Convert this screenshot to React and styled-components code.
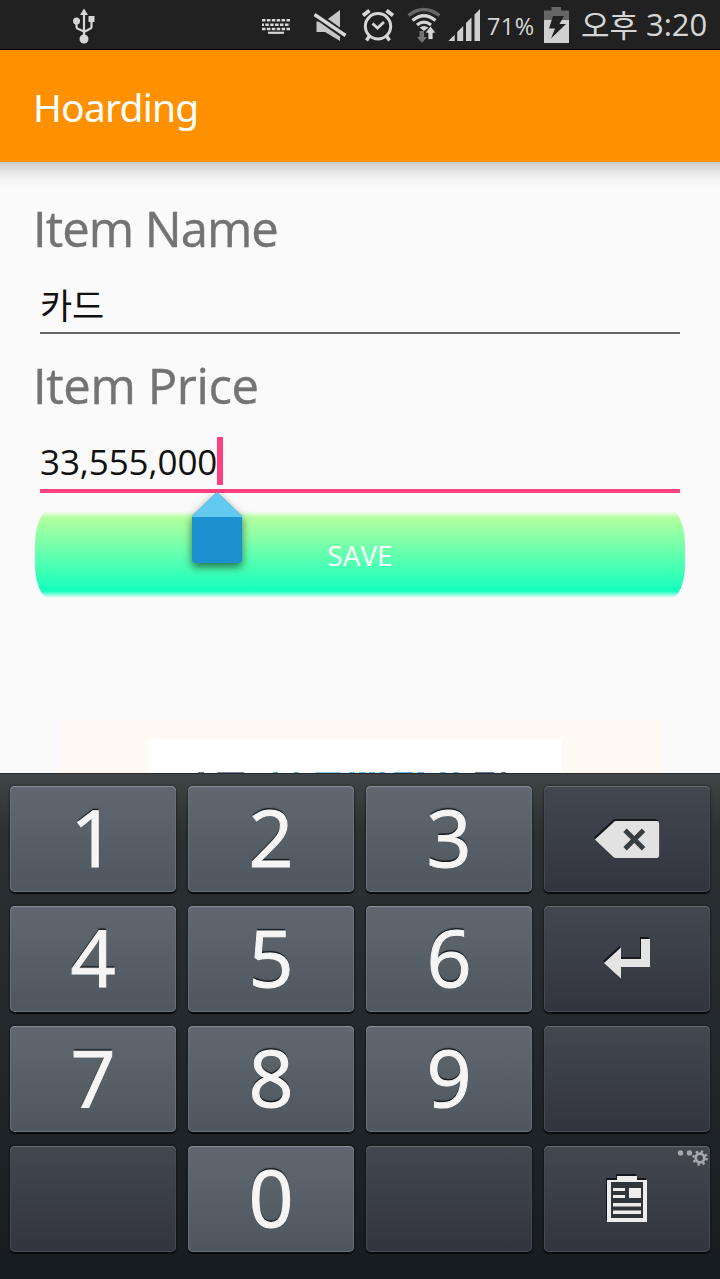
import React from "react";
import styled, { createGlobalStyle } from "styled-components";

const GlobalStyle = createGlobalStyle`
  * {
    box-sizing: border-box;
  }
  body {
    margin: 0;
    background: #fafafa;
    font-family: "Open Sans", "Noto Sans CJK KR", sans-serif;
  }
  svg {
    display: block;
    flex: none;
  }
`;

const Screen = styled.div`
  width: 720px;
  height: 1279px;
  display: flex;
  flex-direction: column;
  overflow: hidden;
  background: #fafafa;
`;

const StatusBar = styled.header`
  flex: none;
  height: 50px;
  display: flex;
  align-items: center;
  background: #212121;
  border-bottom: 1px solid #000;
  color: #d6d6d6;
  padding-left: 70px;
`;
const StatusGroup = styled.div`
  display: flex;
  align-items: center;
  margin-left: auto;
`;
const Percent = styled.span`
  width: 58px;
  padding: 3px 0 0 2px;
  font-size: 23.5px;
  line-height: 50px;
  letter-spacing: 0.4px;
  white-space: nowrap;
`;
const Clock = styled.span`
  width: 146px;
  display: flex;
  padding-left: 7px;
  line-height: 49px;
  font-size: 31px;
  white-space: nowrap;
`;
const Meridiem = styled.span`
  width: 65px;
  font-family: "Noto Sans CJK KR", sans-serif;
  font-weight: 400;
  font-size: 31px;
  line-height: 47px;
`;

const Toolbar = styled.div`
  flex: none;
  height: 112px;
  position: relative;
  display: flex;
  align-items: center;
  padding: 0 33px;
  background: #ff9100;

  &::after {
    content: "";
    position: absolute;
    top: 100%;
    left: 0;
    right: 0;
    height: 25px;
    background: linear-gradient(
      rgba(0, 0, 0, 0.19),
      rgba(0, 0, 0, 0.09) 35%,
      rgba(0, 0, 0, 0.02) 75%,
      transparent
    );
  }
`;
const Title = styled.h1`
  margin: 0;
  color: #fff;
  font-family: "Noto Sans", sans-serif;
  font-weight: 400;
  font-size: 39px;
  letter-spacing: -0.8px;
`;

const Content = styled.main`
  flex: 1;
  min-height: 0;
  overflow: hidden;
  padding: 32px 32px 0;
`;
const Label = styled.div`
  height: 66px;
  padding-left: 1px;
  line-height: 68px;
  font-size: 49px;
  letter-spacing: ${(p) => p.$spacing}px;
  color: #737373;
  -webkit-text-stroke: 0.4px #737373;
`;
const Field = styled.div`
  position: relative;
  display: flex;
  align-items: center;
  margin: 0 8px ${(p) => (p.$active ? 18 : 17)}px;
  height: ${(p) => (p.$active ? 76 : 74)}px;
  padding-top: 16px;
  border-bottom: ${(p) => (p.$active ? "4px solid #ff4081" : "2px solid #666")};
  font-size: 35px;
  letter-spacing: -0.1px;
  color: #111;
`;
const Korean = styled.span`
  font-family: "Noto Sans CJK KR", sans-serif;
  font-size: 35px;
  line-height: 50px;
`;
const Caret = styled.span`
  width: 6px;
  height: 48px;
  background: #ff4081;
`;
const Handle = styled.svg`
  position: absolute;
  top: 73px;
  left: 142px;
  z-index: 2;
  overflow: visible;
  filter: drop-shadow(0 4px 4px rgba(0, 0, 0, 0.55));
`;
const SaveButton = styled.button`
  display: block;
  width: 650px;
  height: 87px;
  margin: 0 3px;
  padding: 1px 0 0;
  border: 0;
  border-radius: 14px / 34px;
  background: linear-gradient(
    rgba(178, 255, 158, 0),
    #b2ff9e 7px,
    #14ffbf 80px,
    rgba(20, 255, 191, 0)
  );
  color: #fff;
  font-family: "Open Sans", sans-serif;
  font-size: 28px;
`;

const Banner = styled.div`
  width: 600px;
  height: 150px;
  margin: 122px auto 0;
  padding-top: 19px;
  background: #fff9f3;
`;
const BannerCard = styled.div`
  width: 414px;
  height: 130px;
  margin-left: 88px;
  padding-top: 33px;
  background: #fff;
`;

const Keyboard = styled.section`
  flex: none;
  height: 506px;
  padding: 12px 10px 0;
  border-top: 1px solid #26292b;
  display: grid;
  grid-template-columns: repeat(4, 166px);
  grid-auto-rows: 106px;
  gap: 14px 12px;
  background: linear-gradient(#404547, #2b3033 12%, #23292d 50%, #171c20);
`;
const Key = styled.div`
  position: relative;
  display: flex;
  align-items: center;
  justify-content: center;
  border-radius: 5px;
  background: ${(p) =>
    p.$dark
      ? "linear-gradient(#43474e, #3a3e46 50%, #32353e)"
      : "linear-gradient(#606770, #555e65 60%, #50565e)"};
  box-shadow:
    inset 0 1px 0 ${(p) => (p.$dark ? "#646b70" : "#899198")},
    inset 0 0 0 1px ${(p) => (p.$dark ? "#444a50" : "#687078")},
    0 2px 1px #080a0c,
    0 0 3px rgba(0, 0, 0, 0.6);
`;
const Digit = styled.span`
  height: 106px;
  color: #f5f5f5;
  font-size: 79px;
  line-height: 101px;
  -webkit-text-stroke: 1px #f5f5f5;
  text-shadow: 0 -2px 1px #15191c;
`;
const KeyIcon = styled.svg`
  filter: drop-shadow(-1px -2px 0 #14171b);
`;
const Corner = styled.svg`
  position: absolute;
  top: 2px;
  right: 1px;
`;

const UsbIcon = () => (
  <svg width="28" height="50" viewBox="70 0 28 50" fill="none" stroke="#d6d6d6" strokeWidth="2.2">
    <path d="M84 37V13M76.5 21v5.5q0 2 2 2.5l5.5 2.5M91.5 19v7.5q0 2-2 2.5L84 32" />
    <path d="M84 8.5l4 6.5h-8z" fill="#d6d6d6" stroke="none" />
    <circle cx="76.5" cy="21" r="3.5" fill="#d6d6d6" stroke="none" />
    <rect x="88.500" y="16" width="6" height="6" fill="#d6d6d6" stroke="none" />
    <circle cx="84" cy="39" r="4.5" fill="#d6d6d6" stroke="none" />
  </svg>
);

const KeyboardIcon = () => (
  <svg width="48" height="50" viewBox="260 0 48 50" stroke="#d6d6d6" strokeWidth="2.6" fill="none">
    <path d="M262 20.3h28" strokeDasharray="3.5 1.4" />
    <path d="M262 24.7h28" strokeDasharray="2 1.3 3.5 1.4 3.5 1.4 3.5 1.4 3.5 1.4 3.5 1.4" />
    <path d="M262 29h28" strokeDasharray="3.5 1.4" />
    <path d="M268 32.8h16" strokeWidth="2.2" />
  </svg>
);

const MuteIcon = () => (
  <svg width="48" height="50" viewBox="308 0 48 50">
    <path d="M316.5 21.5h8L340 10v31l-15-9h-8.5z" fill="#c6c6c6" />
    <path d="M313 13l34 24" stroke="#212121" strokeWidth="7.5" />
    <path d="M314.5 14.5l31 21" stroke="#d6d6d6" strokeWidth="3.4" />
  </svg>
);

const AlarmIcon = () => (
  <svg width="44" height="50" viewBox="356 0 44 50" stroke="#d6d6d6" fill="none">
    <circle cx="378" cy="26.3" r="12.7" strokeWidth="3" />
    <path d="M363 15.5l6.5-5M393 15.5l-6.5-5" strokeWidth="4" />
    <path d="M369.5 36l-3 4.5M386.5 36l3 4.5" strokeWidth="3.5" />
    <path d="M372.5 23.5l5 4.5 6.5-6" strokeWidth="2.8" />
  </svg>
);

const WifiIcon = () => (
  <svg width="46" height="50" viewBox="400 0 46 50" stroke="#d6d6d6" strokeWidth="3.2" fill="none">
    <path d="M408.5 15.5q15-12 31 0" stroke="#666" />
    <path d="M412.5 20.5q11.500-9.500 23 0" />
    <path d="M417 25q7-5.800 14 0" />
    <path d="M419.5 27.5q4.5-3 9 0l-4.5 3.5z" fill="#d6d6d6" stroke="none" />
    <path d="M419.5 31h4.5v6h3l-5 6-5-6h2.5z" fill="#747474" stroke="none" />
    <path d="M428 39.5h5V33h3l-5.5-7-5.5 7h3z" fill="#d6d6d6" stroke="#212121" strokeWidth="0.8" />
  </svg>
);

const SignalIcon = () => (
  <svg width="39" height="50" viewBox="446 0 39 50" fill="#cfcfcf">
    <path d="M448.3 41l6.4-6.300V41zM457.200 41v-9l6-6v15zM466 41V23l5.5-5.5V41zM474.500 41V14.500L480 9v32z" />
  </svg>
);

const BatteryIcon = () => (
  <svg width="31" height="50" viewBox="543 0 31 50">
    <path d="M551.500 7h9.500v3.500h8V20h-25v-9.500h7.500z" fill="#666" />
    <path d="M544 20h25v23h-25z" fill="#d0d0d0" />
    <path d="M553 16h11l-4.5 8h6.5l-15 14.5 4-10h-6z" fill="#212121" />
  </svg>
);

const BackspaceIcon = () => (
  <KeyIcon width="68" height="37" viewBox="0 0 68 38">
    <path d="M1 19L20 1.500Q21 0 23 0H64.500Q67 0 67 2.500V35.500Q67 38 64.500 38H23Q21 38 20 37z" fill="#e2e2e2" />
    <path d="M32 9.500l19 19M51 9.500l-19 19" stroke="#363d43" strokeWidth="5" />
  </KeyIcon>
);

const EnterIcon = () => (
  <KeyIcon width="48" height="40" viewBox="0 0 48 40">
    <path d="M38 0h9v28H18v11.500L1 24 18 8.500V20h20z" fill="#e4e4e4" />
  </KeyIcon>
);

const ClipboardIcon = () => (
  <KeyIcon width="40" height="46" viewBox="0 0 40 46">
    <path d="M10 0h20v4h10v42H0V4h10z" fill="#ededed" />
    <path d="M4 6h32v36H4z" fill="#30353c" />
    <path d="M6 12h12v3H6zM6 19h12v3H6zM22 12h12v10H22zM6 27h28v3.500H6zM6 34.500h28v3.500H6z" fill="#ededed" />
  </KeyIcon>
);

const SettingsMark = () => (
  <Corner width="32" height="20" viewBox="0 0 32 20" fill="#a5a8ab">
    <circle cx="3.5" cy="5" r="2.700" />
    <circle cx="12.5" cy="5" r="2.700" />
    <circle cx="23" cy="10" r="4.300" fill="none" stroke="#a5a8ab" strokeWidth="2.800" />
    <circle cx="23" cy="10" r="6.500" fill="none" stroke="#a5a8ab" strokeWidth="2.500" strokeDasharray="2.300 2.805" />
  </Corner>
);

// tops of the banner lettering that show above the keyboard: [x, width, colour]
const bannerMarks = [
  [50, 6, "#687797"],
  [69, 27, "#7683a8"],
  [125, 5, "#52a9dc"],
  [146, 5, "#52a9dc"],
  [167, 26, "#86c9f1"],
  [201, 6, "#62b5e4"],
  [211, 7, "#62b5e4"],
  [221, 6, "#62b5e4"],
  [231, 6, "#62b5e4"],
  [246, 19, "#62b5e4"],
  [269, 7, "#62b5e4"],
  [292, 6, "#62b5e4"],
  [305, 6, "#62b5e4"],
  [327, 19, "#6b789d"],
  [353, 5, "#6b789d"],
];

export default function App() {
  return (
    <Screen>
      <GlobalStyle />
      <StatusBar>
        <UsbIcon />
        <StatusGroup>
          <KeyboardIcon />
          <MuteIcon />
          <AlarmIcon />
          <WifiIcon />
          <SignalIcon />
          <Percent>71%</Percent>
          <BatteryIcon />
          <Clock>
            <Meridiem>오후</Meridiem>
            <span>3:20</span>
          </Clock>
        </StatusGroup>
      </StatusBar>
      <Toolbar>
        <Title>Hoarding</Title>
      </Toolbar>
      <Content>
        <Label $spacing={-1}>Item Name</Label>
        <Field>
          <Korean>카드</Korean>
        </Field>
        <Label $spacing={-0.4}>Item Price</Label>
        <Field $active>
          <span>33,555,000</span>
          <Caret />
          <Handle width="70" height="75" viewBox="182 490 70 75">
            <path d="M217 492l25 24v43q0 4-4 4h-42q-4 0-4-4v-43z" fill="#1d90d0" />
            <path d="M217 492l25 24v1h-50v-1z" fill="#62caee" />
          </Handle>
        </Field>
        <SaveButton>SAVE</SaveButton>
        <Banner>
          <BannerCard>
            <svg width="414" height="2">
              {bannerMarks.map(([x, w, color]) => (
                <rect key={x} x={x} y="0" width={w} height="2" fill={color} />
              ))}
            </svg>
          </BannerCard>
        </Banner>
      </Content>
      <Keyboard>
        <Key>
          <Digit>1</Digit>
        </Key>
        <Key>
          <Digit>2</Digit>
        </Key>
        <Key>
          <Digit>3</Digit>
        </Key>
        <Key $dark>
          <BackspaceIcon />
        </Key>
        <Key>
          <Digit>4</Digit>
        </Key>
        <Key>
          <Digit>5</Digit>
        </Key>
        <Key>
          <Digit>6</Digit>
        </Key>
        <Key $dark>
          <EnterIcon />
        </Key>
        <Key>
          <Digit>7</Digit>
        </Key>
        <Key>
          <Digit>8</Digit>
        </Key>
        <Key>
          <Digit>9</Digit>
        </Key>
        <Key $dark />
        <Key $dark />
        <Key>
          <Digit>0</Digit>
        </Key>
        <Key $dark />
        <Key $dark>
          <ClipboardIcon />
          <SettingsMark />
        </Key>
      </Keyboard>
    </Screen>
  );
}
